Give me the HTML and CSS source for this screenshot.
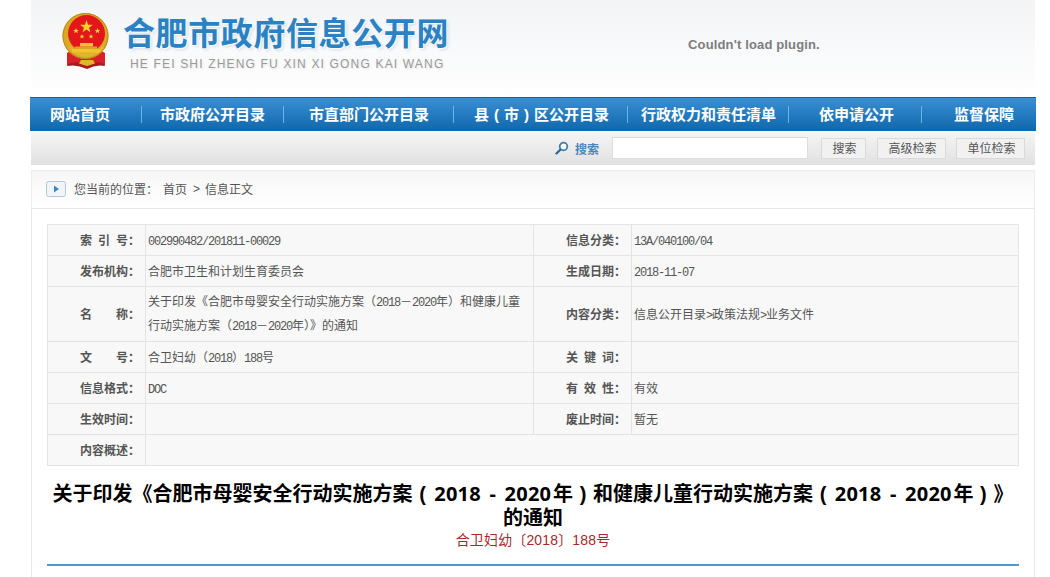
FILE: index.html
```html
<!DOCTYPE html>
<html lang="zh-CN">
<head>
<meta charset="utf-8">
<title>合肥市政府信息公开网</title>
<link rel="stylesheet" href="styles.css">
</head>
<body>
<div class="page">
  <header class="masthead">
    <div class="brand">
      <svg class="emblem" width="52" height="60" viewBox="60 12 52 60" aria-hidden="true">
        <path d="M67 53 L74 49 L98 49 L105 53 L105 65 Q96 63 87 68 Q77 63 67 65 Z" fill="#d9202a"/>
        <path d="M68 64 Q77 60 87 65 Q96 60 104 64 L105 66 Q96 64 87 69 Q77 64 67 66 Z" fill="#a81a20"/>
        <circle cx="85.500" cy="36" r="23" fill="#dca822"/>
        <circle cx="85.500" cy="36" r="22.500" fill="none" stroke="#b88a1a" stroke-width="1"/>
        <circle cx="86.500" cy="33.500" r="18.500" fill="#e3161c"/>
        <path d="M69 45 Q86 62 104 45 L103 50 Q86 64 70 50 Z" fill="#e2b52a"/>
        <rect x="72" y="49" width="28" height="3.500" fill="#f2c230"/>
        <rect x="75" y="46.500" width="22" height="2.500" fill="#d9a520"/>
        <rect x="80" y="43" width="13" height="3.500" fill="#f2c230"/>
        <path d="M81 60h12l2 3.500-8 2.500-8-2.500z" fill="#e2b52a"/>
        <path d="M86.500 20 L88 24.800 L92.800 24.800 L89 27.700 L90.400 32.300 L86.500 29.500 L82.600 32.300 L84 27.700 L80.200 24.800 L85 24.800 Z" fill="#f6d32c"/>
        <path d="M76 28l.8 2h2l-1.600 1.300.6 2-1.800-1.200-1.800 1.200.6-2-1.600-1.300h2z" fill="#f6d32c"/>
        <path d="M97.500 28l.8 2h2l-1.600 1.300.6 2-1.800-1.200-1.800 1.200.6-2-1.600-1.300h2z" fill="#f6d32c"/>
        <path d="M82 34l.7 1.700h1.800l-1.400 1.100.5 1.800-1.600-1-1.600 1 .5-1.800-1.400-1.100h1.800z" fill="#f6d32c"/>
        <path d="M91 34l.7 1.700h1.800l-1.400 1.100.5 1.800-1.600-1-1.600 1 .5-1.800-1.400-1.100h1.800z" fill="#f6d32c"/>
      </svg>
      <div class="brand-text">
        <div class="brand-name">合肥市政府信息公开网</div>
        <div class="brand-pinyin">HE FEI SHI ZHENG FU XIN XI GONG KAI WANG</div>
      </div>
    </div>
    <div class="plugin">Couldn't load plugin.</div>
  </header>

  <nav class="nav">
    <a>网站首页</a>
    <a>市政府公开目录</a>
    <a>市直部门公开目录</a>
    <a>县<span class="p">(</span>市<span class="p">)</span>区公开目录</a>
    <a>行政权力和责任清单</a>
    <a>依申请公开</a>
    <a>监督保障</a>
  </nav>

  <div class="search">
    <svg class="search-icon" width="14" height="14" viewBox="0 0 14 14" aria-hidden="true">
      <circle cx="8.500" cy="5.500" r="3.800" fill="#fff" stroke="#3f7cb0" stroke-width="1.800"/>
      <path d="M5.500 8.500 L1.500 12.500" stroke="#35699a" stroke-width="2.400" stroke-linecap="round"/>
    </svg>
    <span class="search-label">搜索</span>
    <input class="search-input" type="text">
    <span class="btn btn-s">搜索</span>
    <span class="btn btn-l">高级检索</span>
    <span class="btn btn-l">单位检索</span>
  </div>

  <div class="crumb">
    <svg class="crumb-icon" width="20" height="16" viewBox="0 0 20 16" aria-hidden="true">
      <rect x=".5" y=".5" width="19" height="15" rx="2" fill="#f1f5f9" stroke="#b5c6d6"/>
      <path d="M8 4.500 L13 8 L8 11.500 Z" fill="#3f86c0"/>
    </svg>
    <span class="crumb-text">您当前的位置：</span>
    <span class="crumb-home">首页</span>
    <span class="crumb-sep">&gt;</span>
    <span class="crumb-cur">信息正文</span>
  </div>

  <main class="content">
    <table class="meta">
      <colgroup><col class="c1"><col class="c2"><col class="c3"><col class="c4"></colgroup>
      <tr>
        <th>索&ensp;引&ensp;号：</th><td><span class="m">002990482/201811-00029</span></td>
        <th>信息分类：</th><td><span class="m">13A/040100/04</span></td>
      </tr>
      <tr>
        <th>发布机构：</th><td>合肥市卫生和计划生育委员会</td>
        <th>生成日期：</th><td><span class="m">2018-11-07</span></td>
      </tr>
      <tr class="tall">
        <th>名&emsp;&emsp;称：</th>
        <td class="lines">
          <div>关于印发《合肥市母婴安全行动实施方案（<span class="m">2018</span>－<span class="m">2020</span>年）和健康儿童</div>
          <div>行动实施方案（<span class="m">2018</span>－<span class="m">2020</span>年）》的通知</div>
        </td>
        <th>内容分类：</th><td>信息公开目录<span class="m">&gt;</span>政策法规<span class="m">&gt;</span>业务文件</td>
      </tr>
      <tr>
        <th>文&emsp;&emsp;号：</th><td>合卫妇幼（<span class="m">2018</span>）<span class="m">188</span>号</td>
        <th>关&ensp;键&ensp;词：</th><td></td>
      </tr>
      <tr>
        <th>信息格式：</th><td><span class="m">DOC</span></td>
        <th>有&ensp;效&ensp;性：</th><td>有效</td>
      </tr>
      <tr>
        <th>生效时间：</th><td></td>
        <th>废止时间：</th><td>暂无</td>
      </tr>
      <tr>
        <th>内容概述：</th><td colspan="3"></td>
      </tr>
    </table>

    <h1 class="title">
      <span class="title-line">关于印发《合肥市母婴安全行动实施方案<span class="p">(</span><span class="n">2018 - 2020</span>年<span class="p">)</span>和健康儿童行动实施方案<span class="p">(</span><span class="n">2018 - 2020</span>年<span class="p">)</span>》</span>
      <span class="title-line">的通知</span>
    </h1>
    <p class="docno">合卫妇幼〔2018〕188号</p>
    <div class="rule"></div>
  </main>
</div>
</body>
</html>
```
FILE: styles.css
```css
* { box-sizing: border-box; }
html, body { margin: 0; padding: 0; background: #fff; }
body { font-family: "Liberation Sans", "Noto Sans CJK SC", sans-serif; font-size: 12px; color: #555; }
.page { width: 1006px; margin-left: 30px; }

.masthead {
  height: 97px; margin: 0 1px; display: flex;
  background: linear-gradient(#f2f4f6, #fff);
}
.brand { display: flex; width: 657px; }
.emblem { margin: 12px 0 0 29px; flex: none; }
.brand-text { margin-left: 11px; }
.brand-name {
  margin-top: 12px; font-size: 32px; line-height: 44px; font-weight: 700; letter-spacing: .6px;
  color: #2b82c3; white-space: nowrap; text-shadow: 1px 1px 1px #fff, 2px 2px 3px #d5dde4;
}
.brand-pinyin {
  margin: 1px 0 0 7px; font-size: 12px; line-height: 15px; letter-spacing: 1.17px; color: #9a9a9a; white-space: nowrap;
  text-shadow: 1px 1px 2px #e3e3e3;
}
.plugin { margin-top: 37px; font-size: 13px; line-height: 16px; font-weight: 700; letter-spacing: .15px; color: #7d7d7d; white-space: nowrap; }

.nav {
  height: 34px; display: flex; align-items: center;
  background: linear-gradient(#3a8fd2, #0f67ac); border-top: 1px solid #1c628f;
}
.nav a {
  display: block; font-size: 15px; line-height: 18px; font-weight: 700; color: #fff; white-space: nowrap;
  border-right: 1px solid #6db3e6; height: 17px;
}
.nav a:nth-child(1) { width: 112px; padding-left: 20px; }
.nav a:nth-child(2) { width: 142px; padding-left: 18px; }
.nav a:nth-child(3) { width: 170px; padding-left: 25px; }
.nav a:nth-child(4) { width: 174px; padding-left: 20px; }
.nav a:nth-child(5) { width: 161px; padding-left: 13px; }
.nav a:nth-child(6) { width: 133px; padding-left: 30px; }
.nav a:nth-child(7) { padding-left: 32px; border-right: 0; }
.p { display: inline-block; width: 1em; text-align: center; }

.search {
  height: 34px; margin: 0 1px; display: flex; align-items: center; padding-left: 524px;
  background: linear-gradient(#f5f5f5, #e1e1e1);
}
.search-icon { flex: none; }
.search-label { margin-left: 6px; color: #4d86bb; font-weight: 700; }
.search-input { width: 196px; height: 22px; margin-left: 13px; border: 1px solid #dcdcdc; background: #fff; padding: 0; }
.btn {
  height: 21px; line-height: 20px; text-align: center; color: #555; margin-left: 13px; padding-left: 2px;
  background: #f1f1f1; border: 1px solid #dadada;
}
.btn-s { width: 45px; }
.btn-l { width: 69px; margin-left: 10px; }
.btn-s + .btn-l { margin-left: 11px; }

.crumb {
  height: 38px; margin: 5px 1px 0; padding: 0 0 2px 14px; display: flex; align-items: center;
  background: linear-gradient(#f6f6f6, #fff); border-top: 1px solid #ececec; border-left: 1px solid #eee; border-right: 1px solid #eee;
}
.crumb-text { margin-left: 8px; }
.crumb-home { margin-left: 5px; }
.crumb-sep { margin: 0 5px 0 6px; }

.content {
  margin: 0 1px; height: 369px; padding: 15px 15px 0; border: 1px solid #e8e8e8; border-bottom: 0;
}
.meta { width: 972px; table-layout: fixed; border-collapse: collapse; background: #f8f8f8; }
.c1 { width: 98px; } .c2 { width: 388px; } .c3 { width: 98px; }
.meta tr { height: 31px; }
.meta tr.tall { height: 55px; }
.meta th, .meta td { border: 1px solid #e4e4e4; line-height: 24px; padding: 1px 0 0; }
.meta th { text-align: right; padding-right: 5px; font-weight: 700; color: #555; white-space: nowrap; }
.meta td { padding-left: 2px; padding-right: 10px; color: #555; }
.meta td.lines { padding-top: 0; white-space: nowrap; }
.m { font-family: "Liberation Mono", monospace; font-size: 12px; letter-spacing: -1.2px; line-height: 1; }

.title { margin: 16px 0 0; font-size: 20px; line-height: 24px; font-weight: 700; color: #000; text-align: center; }
.title-line { display: block; white-space: nowrap; }
.n { padding: 0 1.7px; font-family: "Noto Sans", "Liberation Sans", sans-serif; letter-spacing: .25px; word-spacing: 3px; }
.docno { margin: 0; font-size: 14px; line-height: 20px; letter-spacing: .15px; color: #a8282c; text-align: center; }
.rule { height: 2px; margin-top: 14px; width: 972px; background: #4a9ad6; }
```
